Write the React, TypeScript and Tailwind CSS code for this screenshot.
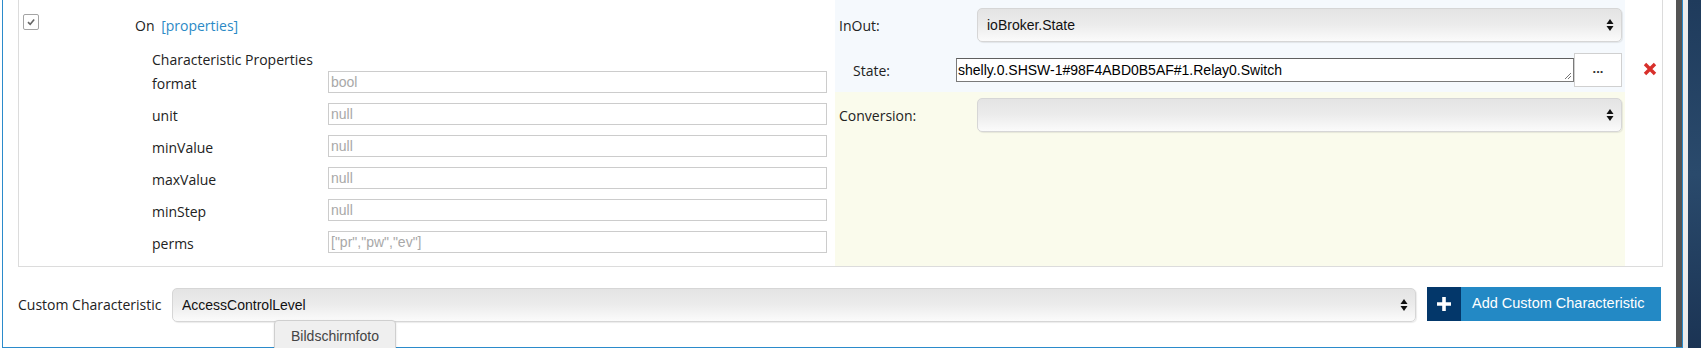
const labelFont = "font-['Open_Sans',sans-serif]";
const sysFont = "font-['Liberation_Sans',Arial,sans-serif]";

function SelectArrows() {
  return (
    <svg width="8" height="14" viewBox="0 0 8 14" className="shrink-0">
      <path d="M4 1 L7.5 6 L0.5 6 Z" fill="#111" />
      <path d="M4 13 L7.5 8 L0.5 8 Z" fill="#111" />
    </svg>
  );
}

function MacSelect({ value, className }: { value: string; className?: string }) {
  return (
    <div
      className={`flex items-center h-[34px] rounded-[5px] border border-[#d6d6d6] bg-gradient-to-b from-[#e4e4e4] via-[#ececec] to-[#fbfbfb] shadow-[1px_1px_1px_rgba(0,0,0,0.08)] pl-[9px] pr-[7px] ${className ?? ""}`}
    >
      <span className={`${sysFont} text-[14px] text-[#111] flex-1 truncate`}>{value}</span>
      <SelectArrows />
    </div>
  );
}

const props = [
  { name: "format", value: "bool" },
  { name: "unit", value: "null" },
  { name: "minValue", value: "null" },
  { name: "maxValue", value: "null" },
  { name: "minStep", value: "null" },
  { name: "perms", value: '["pr","pw","ev"]' },
];

function LeftColumn() {
  return (
    <div className="w-[816px] shrink-0 pb-[13px]">
      <div className="flex items-start pt-[14px] pl-[4px]">
        <div className="w-4 h-4 border border-[#a4a4a4] rounded-[2px] bg-white flex items-center justify-center">
          <svg width="10" height="10" viewBox="0 0 10 10">
            <path d="M2 5.2 L4.2 7.3 L8.2 2.6" stroke="#666" strokeWidth="1.6" fill="none" />
          </svg>
        </div>
        <div className={`${labelFont} text-[14px] leading-[20px] mt-[2px] ml-[96px] text-[#222]`}>
          On <span className="ml-[3px] text-[#2b8ac6]">[properties]</span>
        </div>
      </div>
      <div className={`${labelFont} text-[14px] leading-[20px] text-[#222] mt-[14px] pl-[133px]`}>
        Characteristic Properties
      </div>
      <div className="flex flex-col gap-[10px] mt-[1px] pl-[133px]">
        {props.map((p) => (
          <div key={p.name} className="flex items-center h-[22px]">
            <div className={`${labelFont} text-[14px] text-[#222] w-[176px] pt-[2px]`}>{p.name}</div>
            <div className="w-[499px] h-[22px] border border-[#cccccc] bg-white flex items-center px-[2px]">
              <span className={`${sysFont} text-[14px] text-[#a8a8a8]`}>{p.value}</span>
            </div>
          </div>
        ))}
      </div>
    </div>
  );
}

function RightColumn() {
  return (
    <div className="w-[790px] shrink-0 flex flex-col">
      <div className="h-[92px] bg-[#f5f9fd] pt-[8px]">
        <div className="flex items-center">
          <div className={`${labelFont} text-[14px] text-[#222] w-[142px] pl-[4px]`}>InOut:</div>
          <MacSelect value="ioBroker.State" className="w-[645px]" />
        </div>
        <div className="flex items-center mt-[11px] h-[34px]">
          <div className={`${labelFont} text-[14px] text-[#222] w-[121px] pl-[18px]`}>State:</div>
          <div className="relative w-[618px] h-[24px] border border-[#7a7a7a] border-t-[#5f5f5f] bg-white flex items-center pl-[1px]">
            <span className={`${sysFont} text-[14px] text-black`}>shelly.0.SHSW-1#98F4ABD0B5AF#1.Relay0.Switch</span>
            <svg width="8" height="8" viewBox="0 0 8 8" className="absolute right-[1px] bottom-[1px]">
              <path d="M7 1 L1 7 M7 4 L4 7" stroke="#777" strokeWidth="1" />
            </svg>
          </div>
          <div className="w-[48px] h-[34px] border border-[#d0d0d0] bg-white flex items-center justify-center">
            <span className={`${sysFont} text-[13px] font-bold text-[#333] leading-none -mt-[4px]`}>...</span>
          </div>
        </div>
      </div>
      <div className="flex-1 bg-[#fafbec] pt-[6px]">
        <div className="flex items-center">
          <div className={`${labelFont} text-[14px] text-[#222] w-[142px] pl-[4px]`}>Conversion:</div>
          <MacSelect value="" className="w-[645px]" />
        </div>
      </div>
    </div>
  );
}

export default function App() {
  return (
    <div className="flex w-[1701px] h-[348px] bg-white overflow-hidden">
      <div className="w-[2px] shrink-0 bg-white" />
      <div className="relative w-[1681px] h-[348px] shrink-0 flex border-l border-r border-b border-[#2b8bcb] bg-white">
        <div className="flex-1 flex flex-col">
          <div className="ml-[15px] mr-[13px] flex border-l border-r border-b border-[#dcdcdc] h-[267px]">
            <LeftColumn />
            <RightColumn />
            <div className="flex-1 pl-[18px] pt-[62px]">
              <svg width="14" height="14" viewBox="0 0 14 14">
                <path d="M2 2 L12 12 M12 2 L2 12" stroke="#d8302b" strokeWidth="3.4" />
              </svg>
            </div>
          </div>
          <div className="ml-[15px] mr-[14px] mt-[20px] flex items-start">
            <div className={`${labelFont} text-[14px] text-[#222] w-[154px] pt-[7px]`}>Custom Characteristic</div>
            <MacSelect value="AccessControlLevel" className="w-[1244px] mt-[1px]" />
            <button className="ml-[11px] flex h-[34px] w-[234px]">
              <span className="w-[34px] h-[34px] bg-[#03376a] flex items-center justify-center">
                <svg width="16" height="16" viewBox="0 0 16 16">
                  <path d="M8 1 V15 M1 8 H15" stroke="#fff" strokeWidth="3.6" />
                </svg>
              </span>
              <span className={`flex-1 h-[34px] bg-[#2389c5] text-white ${sysFont} text-[14.5px] flex items-center pl-[11px]`}>
                Add Custom Characteristic
              </span>
            </button>
          </div>
        </div>
        <div className="w-[6px] shrink-0 bg-[#545454]" />
        <div className="absolute left-[271px] top-[320px] w-[122px] h-[34px] rounded-[4px] border border-[#cfcfcf] bg-[#efefef] shadow-[0_1px_2px_rgba(0,0,0,0.15)] flex justify-center pt-[5px]">
          <span className={`${sysFont} text-[14px] text-[#444]`}>Bildschirmfoto</span>
        </div>
      </div>
      <div className="w-[5px] shrink-0 bg-[#ececec]" />
      <div className="flex-1 bg-gradient-to-b from-[#1f3b5c] via-[#2a4a6c] to-[#1b3454]" />
    </div>
  );
}
